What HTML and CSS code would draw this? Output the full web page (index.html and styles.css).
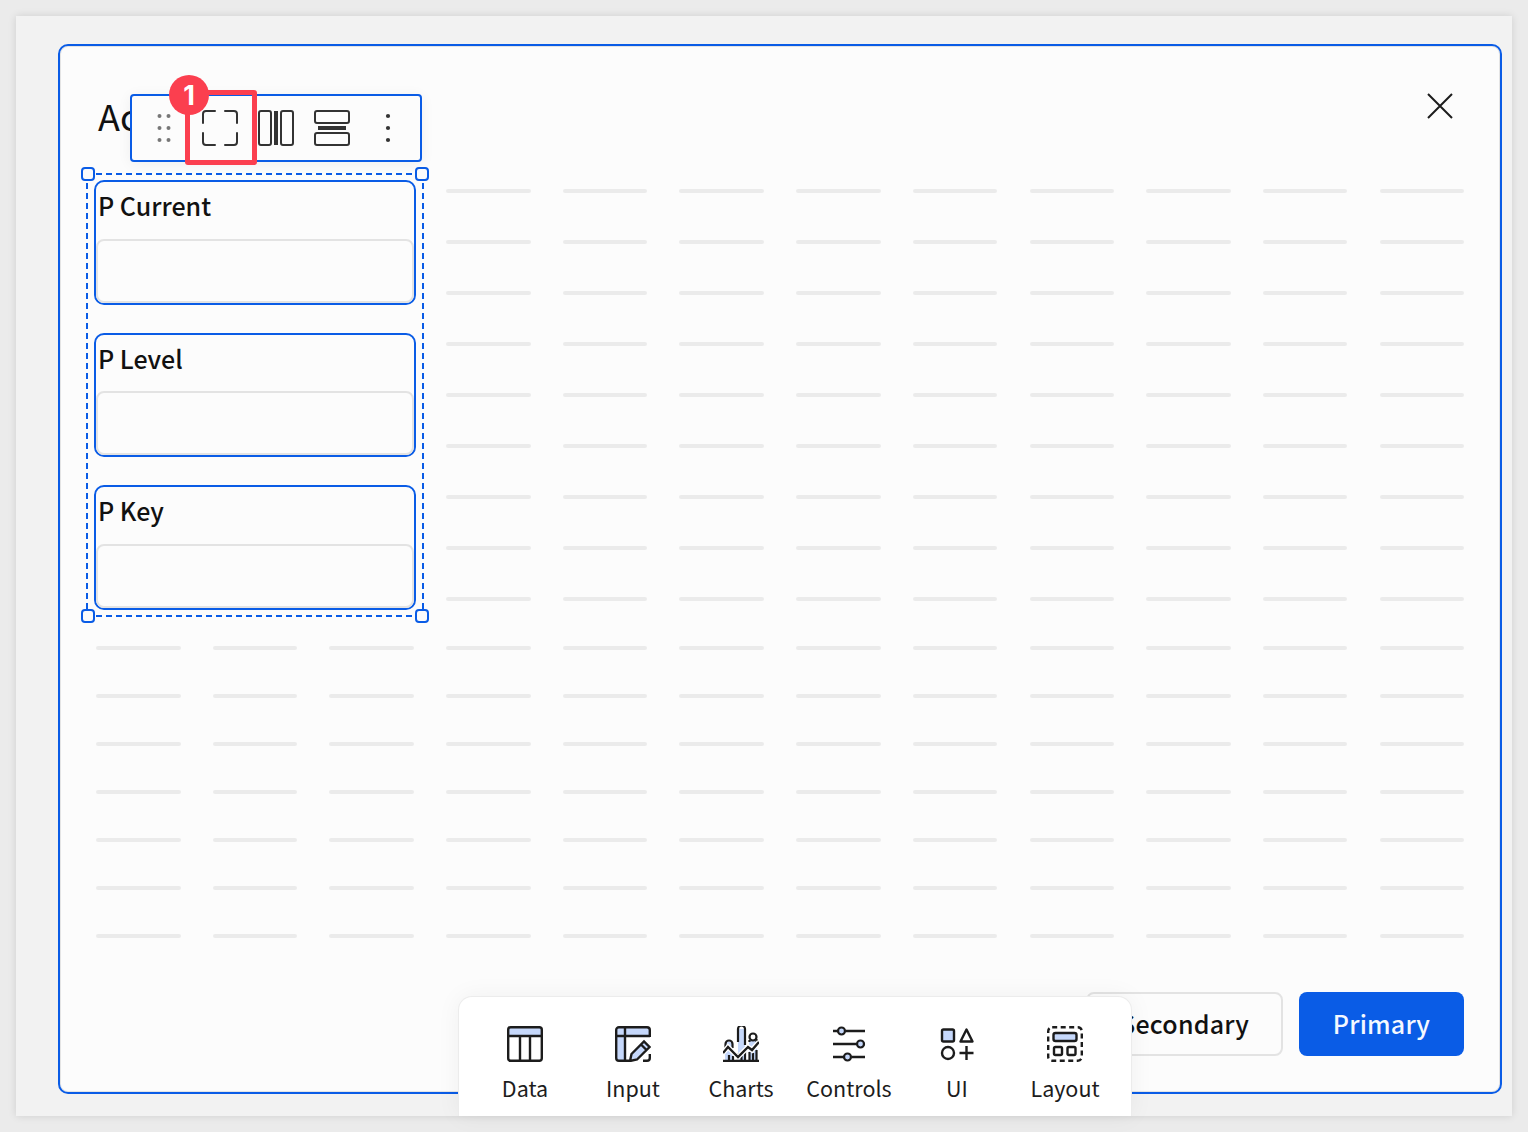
FILE: index.html
```html
<!DOCTYPE html>
<html lang="en">
<head>
  <meta charset="UTF-8">
  <meta name="viewport" content="width=device-width, initial-scale=1.0">
  <title>Modal layout</title>
  <link rel="stylesheet" href="styles.css">
</head>
<body>
  <div class="page">
    <div class="modal">
      <div class="modal-header">
        <h1 class="modal-title">Ac</h1>
        <svg class="close-icon" viewBox="0 0 28 28"><path d="M2 2l24 24M26 2L2 26"/></svg>

        <div class="toolbar">
          <svg class="tool-icon" viewBox="0 0 36 36">
            <g class="dots-grey">
              <circle cx="13.5" cy="6" r="2"/><circle cx="22.5" cy="6" r="2"/>
              <circle cx="13.5" cy="18" r="2"/><circle cx="22.5" cy="18" r="2"/>
              <circle cx="13.5" cy="30" r="2"/><circle cx="22.5" cy="30" r="2"/>
            </g>
          </svg>
          <svg class="tool-icon" viewBox="0 0 36 36">
            <path class="line" d="M13 1H4a3 3 0 0 0-3 3v9M23 1h9a3 3 0 0 1 3 3v9M13 35H4a3 3 0 0 1-3-3v-9M23 35h9a3 3 0 0 0 3-3v-9"/>
          </svg>
          <svg class="tool-icon" viewBox="0 0 36 36">
            <rect class="line" x="1" y="1" width="12" height="34" rx="2"/>
            <rect class="solid" x="16" y="1" width="4" height="34"/>
            <rect class="line" x="23" y="1" width="12" height="34" rx="2"/>
          </svg>
          <svg class="tool-icon" viewBox="0 0 36 36">
            <rect class="line" x="1" y="1" width="34" height="12" rx="2"/>
            <rect class="solid" x="4" y="16" width="28" height="4"/>
            <rect class="line" x="1" y="23" width="34" height="12" rx="2"/>
          </svg>
          <svg class="tool-icon" viewBox="0 0 36 36">
            <g class="solid">
              <circle cx="18" cy="6" r="2.100"/><circle cx="18" cy="18" r="2.100"/><circle cx="18" cy="30" r="2.100"/>
            </g>
          </svg>
          <div class="callout-box"></div>
          <div class="callout-badge">1</div>
        </div>
      </div>

      <div class="canvas" id="canvas">
        <div class="selection">
          <span class="handle handle-tl"></span>
          <span class="handle handle-tr"></span>
          <span class="handle handle-bl"></span>
          <span class="handle handle-br"></span>
          <div class="control">
            <div class="control-label">P Current</div>
            <div class="control-input"></div>
          </div>
          <div class="control">
            <div class="control-label">P Level</div>
            <div class="control-input"></div>
          </div>
          <div class="control">
            <div class="control-label">P Key</div>
            <div class="control-input"></div>
          </div>
        </div>
      </div>

      <div class="modal-footer">
        <button class="btn btn-secondary">Secondary</button>
        <button class="btn btn-primary">Primary</button>
      </div>
    </div>

    <div class="tray">
      <div class="tray-item">
        <svg class="tray-icon" viewBox="0 0 36 36">
          <path class="tint" d="M1.5 10V4a2.5 2.5 0 0 1 2.5-2.5h28A2.5 2.5 0 0 1 34.500 4v6z"/>
          <rect class="ink" x="1.200" y="1.200" width="33.600" height="33.600" rx="2.500"/>
          <path class="ink" d="M1 10h34M13 10v25M23 10v25"/>
        </svg>
        <span>Data</span>
      </div>
      <div class="tray-item">
        <svg class="tray-icon" viewBox="0 0 36 36">
          <path class="tint" d="M1.500 4A2.500 2.500 0 0 1 4 1.500h28A2.500 2.500 0 0 1 34.500 4v6H10v25H4a2.500 2.500 0 0 1-2.500-2.500z"/>
          <path class="tint" d="M15 34l1.500-7L29 15l5 5-12 12z"/>
          <path class="ink" d="M14 34.800H4A2.800 2.800 0 0 1 1.200 32V4A2.800 2.800 0 0 1 4 1.200h28A2.800 2.800 0 0 1 34.800 4v7M1 10h34M10 1v34M34.800 28v4a2.800 2.800 0 0 1-2.800 2.800h-4"/>
          <path class="ink" d="M15 35l1.500-7L29 15.500l5.500 5.500L22 33.500zM26 18.500l5.500 5.500"/>
        </svg>
        <span>Input</span>
      </div>
      <div class="tray-item">
        <svg class="tray-icon" viewBox="0 0 36 36">
          <path class="tint" d="M2 16h8v18H2zM15 3h7v31h-7zM26 14h8v20h-8z"/>
          <path class="ink thin" d="M2.500 24v-6a3.500 3.500 0 0 1 7 0v4M15 16V3a3.500 3.500 0 0 1 7 0v16M26.500 16v-2M33.500 13v3M6 29v5M10 30v4M15 27v7M18.500 30v4M22 26v8M26.500 26v8M30 27v7M33.500 24v10"/>
          <circle class="ink thin" cx="30" cy="11" r="3.500"/>
          <path class="halo" d="M0 27l5-6 10 10 10-10 4 3 7-8"/>
          <path class="ink" d="M0 27l5-6 10 10 10-10 4 3 7-8"/>
          <path class="ink" d="M0 35h36"/>
        </svg>
        <span>Charts</span>
      </div>
      <div class="tray-item">
        <svg class="tray-icon" viewBox="0 0 36 36">
          <path class="ink" d="M2 5h5M15 5h19M2 18h23M33 18h1M2 31h11M21 31h13"/>
          <circle class="tint ink thin" cx="10.500" cy="5" r="3.500"/>
          <circle class="tint ink thin" cx="29.500" cy="18" r="3.500"/>
          <circle class="tint ink thin" cx="16.500" cy="31" r="3.500"/>
        </svg>
        <span>Controls</span>
      </div>
      <div class="tray-item">
        <svg class="tray-icon" viewBox="0 0 36 36">
          <rect class="tint ink" x="3" y="3.500" width="12" height="12" rx="1.500"/>
          <path class="ink join" d="M27.500 3.500l6 12h-12z"/>
          <circle class="ink" cx="9" cy="27" r="6"/>
          <path class="ink" d="M27.500 20v14M20.500 27h14"/>
        </svg>
        <span>UI</span>
      </div>
      <div class="tray-item">
        <svg class="tray-icon" viewBox="0 0 36 36">
          <rect class="ink dashed" x="1.200" y="1.200" width="33.600" height="33.600" rx="4"/>
          <rect class="tint ink" x="6.500" y="7" width="23" height="8" rx="2"/>
          <rect class="ink" x="7" y="21" width="8" height="8" rx="1.500"/>
          <rect class="ink" x="20.500" y="21" width="8" height="8" rx="1.500"/>
        </svg>
        <span>Layout</span>
      </div>
    </div>
  </div>

  <script src="script.js"></script>
</body>
</html>
```

FILE: styles.css
```css
/* General styles */
* {
  box-sizing: border-box;
}

body {
  margin: 0;
  padding: 16px;
  height: 1132px;
  overflow: hidden;
  background-color: #ebebeb;
  font-family: "Noto Sans CJK SC", "Noto Sans", sans-serif;
  color: #111;
}

.page {
  position: relative;
  height: 1100px;
  padding: 28px 10px 0 42px;
  background-color: #f2f2f2;
  box-shadow: 0 0 8px rgba(0, 0, 0, 0.12);
}

/* Modal */
.modal {
  height: 1050px;
  padding: 0 36px;
  background-color: #fcfcfc;
  border: 2px solid #0a5ce6;
  border-radius: 10px;
  box-shadow: inset 0 0 0 1px #e4e4e4;
}

.modal-header {
  position: relative;
  display: flex;
  justify-content: space-between;
  height: 143px;
  padding-top: 45px;
}

.modal-title {
  margin: 0 0 0 2px;
  font-size: 36px;
  font-weight: 400;
  line-height: 48px;
}

.close-icon {
  width: 28px;
  height: 28px;
  margin-top: 1px;
  margin-right: 10px;
  fill: none;
  stroke: #1c1c1c;
  stroke-width: 2;
}

/* Floating toolbar */
.toolbar {
  position: absolute;
  left: 34px;
  top: 48px;
  display: flex;
  gap: 20px;
  align-items: center;
  width: 292px;
  height: 68px;
  padding: 0 14px;
  background-color: #fcfcfc;
  border: 2px solid #0a5ce6;
  border-radius: 4px;
  box-shadow: 0 2px 14px rgba(0, 0, 0, 0.06);
}

.tool-icon {
  width: 36px;
  height: 36px;
}

.tool-icon .line {
  fill: none;
  stroke: #333;
  stroke-width: 2;
  stroke-linecap: round;
}

.tool-icon .solid {
  fill: #333;
}

.tool-icon .dots-grey {
  fill: #777;
}

.callout-box {
  position: absolute;
  left: 53px;
  top: -6px;
  width: 72px;
  height: 75px;
  border: 5px solid #fb3f4f;
  border-radius: 3px;
}

.callout-badge {
  position: absolute;
  left: 37px;
  top: -21px;
  display: flex;
  align-items: center;
  justify-content: center;
  width: 40px;
  height: 40px;
  background-color: #fb3f4f;
  border-radius: 50%;
  color: #fff;
  font-family: Inter, sans-serif;
  font-size: 27px;
  font-weight: 700;
  line-height: 1;
}

/* Canvas and placeholder lines */
.canvas {
  position: relative;
  display: grid;
  grid-template-columns: repeat(12, 84.6px);
  grid-template-rows: repeat(8, 51px) 49px repeat(6, 48px) 4px;
  column-gap: 32.1px;
  align-items: start;
}

.grid-line {
  height: 4px;
  background-color: #ebebeb;
  border-radius: 2px;
}

/* Selected group */
.selection {
  position: absolute;
  left: -10px;
  top: -16px;
  z-index: 1;
  display: flex;
  flex-direction: column;
  gap: 28px;
  width: 338px;
  height: 444px;
  padding: 7px 8px;
  background-color: #fcfcfc;
  background-image:
    repeating-linear-gradient(90deg, #0a5ce6 0 6px, transparent 6px 10px),
    repeating-linear-gradient(90deg, #0a5ce6 0 6px, transparent 6px 10px),
    repeating-linear-gradient(180deg, #0a5ce6 0 6px, transparent 6px 10px),
    repeating-linear-gradient(180deg, #0a5ce6 0 6px, transparent 6px 10px);
  background-position: top, bottom, left, right;
  background-size: 100% 2px, 100% 2px, 2px 100%, 2px 100%;
  background-repeat: no-repeat;
}

.handle {
  position: absolute;
  width: 14px;
  height: 14px;
  background-color: #fcfcfc;
  border: 2px solid #0a5ce6;
  border-radius: 4px;
}

.handle-tl { left: -5px; top: -6px; }
.handle-tr { right: -5px; top: -6px; }
.handle-bl { left: -5px; bottom: -6px; }
.handle-br { right: -5px; bottom: -6px; }

.control {
  display: flex;
  flex: 1;
  flex-direction: column;
  justify-content: space-between;
  border: 2px solid #0a5ce6;
  border-radius: 10px;
}

.control-label {
  padding: 4px 3px 0 2px;
  font-size: 25px;
  font-weight: 500;
  line-height: 38px;
}

.control-input {
  height: 64px;
  background-color: #fcfcfc;
  border: 2px solid #e3e3e3;
  border-radius: 8px;
}

/* Footer buttons */
.modal-footer {
  display: flex;
  gap: 16px;
  justify-content: flex-end;
  margin-top: 54px;
}

.btn {
  height: 64px;
  padding: 0 32px 2px;
  border-radius: 8px;
  font-family: inherit;
  font-size: 25px;
  font-weight: 500;
  letter-spacing: 0.2px;
}

.btn-secondary {
  background-color: #fcfcfc;
  border: 2px solid #e3e3e3;
  color: #111;
}

.btn-primary {
  width: 165px;
  padding: 0 0 2px;
  background-color: #0a5ce6;
  border: none;
  color: #f4f8ff;
}

/* Bottom tray */
.tray {
  position: absolute;
  left: 442px;
  bottom: 0;
  z-index: 2;
  display: flex;
  width: 674px;
  height: 120px;
  padding: 0 12px;
  background-color: #fff;
  border: 1px solid #ececec;
  border-bottom: none;
  border-radius: 14px 14px 0 0;
  box-shadow: 0 0 24px rgba(0, 0, 0, 0.05);
}

.tray-item {
  display: flex;
  flex-direction: column;
  align-items: center;
  width: 108px;
  padding-top: 29px;
  font-size: 21.5px;
  line-height: 32px;
  color: #1c1c1c;
}

.tray-item span {
  margin-top: 10px;
}

.tray-icon {
  width: 36px;
  height: 36px;
}

.tray-icon .tint {
  fill: #c6d8fb;
}

.tray-icon .ink {
  fill: none;
  stroke: #1c1c1c;
  stroke-width: 2.4;
}

.tray-icon .tint.ink {
  fill: #c6d8fb;
}

.tray-icon .thin {
  stroke-width: 2.2;
}

.tray-icon .join {
  stroke-linejoin: round;
}

.tray-icon .halo {
  fill: none;
  stroke: #fff;
  stroke-width: 5;
}

.tray-icon .dashed {
  stroke-dasharray: 5 3.500;
}
```

FILE: script.js
```js
// placeholder lines for the layout grid, 16 rows of 12
const canvas = document.getElementById("canvas");
for (let i = 0; i < 16 * 12; i++) {
  const line = document.createElement("div");
  line.className = "grid-line";
  canvas.appendChild(line);
}
```
